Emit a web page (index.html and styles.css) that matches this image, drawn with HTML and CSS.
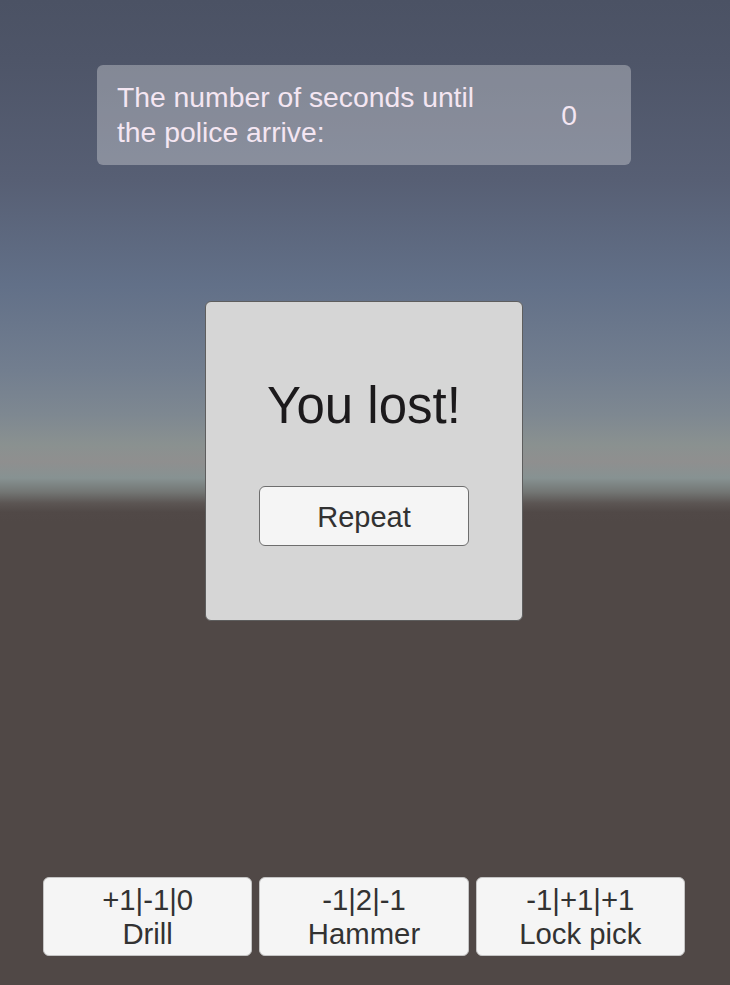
FILE: index.html
```html
<!DOCTYPE html>
<html>
<head>
<meta charset="utf-8">
<link rel="stylesheet" href="styles.css">
</head>
<body>
<div class="screen">
  <div class="timer">
    <div class="timer-label">The number of seconds until<br>the police arrive:</div>
    <div class="timer-value">0</div>
  </div>
  <div class="dialog">
    <div class="dialog-title">You lost!</div>
    <button class="btn repeat">Repeat</button>
  </div>
  <div class="tools">
    <button class="btn tool">+1|-1|0<br>Drill</button>
    <button class="btn tool">-1|2|-1<br>Hammer</button>
    <button class="btn tool">-1|+1|+1<br>Lock pick</button>
  </div>
</div>
</body>
</html>
```
FILE: styles.css
```css
html, body {
  margin: 0;
  padding: 0;
}
body {
  width: 730px;
  height: 985px;
  overflow: hidden;
  font-family: "Liberation Sans", Arial, sans-serif;
  background: linear-gradient(to bottom,
    #4b5264 0px,
    #4e5568 60px,
    #575f74 180px,
    #627088 285px,
    #727e8f 370px,
    #7e8891 415px,
    #8a9190 445px,
    #8f8f8f 462px,
    #879292 478px,
    #737674 492px,
    #5c5654 503px,
    #514947 512px,
    #504846 522px,
    #504846 985px);
}
.screen {
  height: 985px;
  display: flex;
  flex-direction: column;
}
.timer {
  margin: 65px 0 0 97px;
  width: 534px;
  height: 100px;
  box-sizing: border-box;
  border-radius: 6px;
  background: rgba(255, 255, 255, 0.3);
  display: flex;
  align-items: center;
  padding-left: 20px;
  color: #f4e6f2;
  font-size: 28.3px;
}
.timer-label {
  width: 419px;
  line-height: 35px;
  white-space: nowrap;
}
.timer-value {
  width: 66px;
  text-align: center;
  line-height: 35px;
}
.dialog {
  margin: 136px 0 0 205px;
  width: 318px;
  height: 320px;
  box-sizing: border-box;
  border: 1px solid #5e5e5e;
  border-radius: 6px;
  background: #d6d6d6;
  display: flex;
  flex-direction: column;
  align-items: center;
  padding-top: 75px;
}
.dialog-title {
  font-size: 51px;
  line-height: 58px;
  color: #1c1a1c;
  margin-left: 0;
}
.btn {
  font-family: "Liberation Sans", Arial, sans-serif;
  font-size: 29px;
  color: #323232;
  background: #f5f5f5;
  box-sizing: border-box;
  border-radius: 6px;
  padding: 0;
  margin: 0;
}
.repeat {
  margin-top: 51px;
  width: 210px;
  height: 60px;
  border: 1px solid #6e6e6e;
  padding-top: 2px;
}
.tools {
  margin-top: auto;
  margin-bottom: 29px;
  padding: 0 45px 0 43px;
  display: grid;
  grid-template-columns: repeat(3, 1fr);
  gap: 7px;
}
.tool {
  height: 79px;
  border: 1px solid #c4c4c4;
  line-height: 34px;
  font-size: 29.3px;
}
```
